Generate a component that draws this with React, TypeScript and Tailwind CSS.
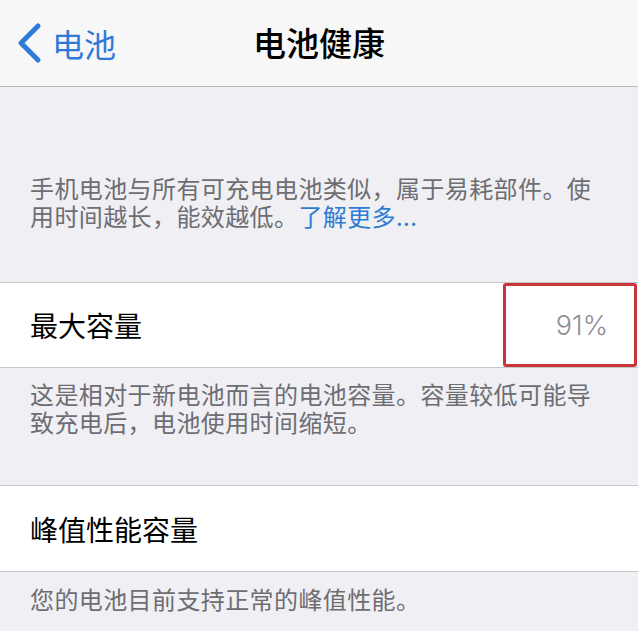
import React from 'react'

// iOS 设置 → 电池 → 电池健康
const cjk = { fontFamily: '"Noto Sans CJK SC", "Noto Sans", sans-serif' }
const latin = { fontFamily: 'Inter, "Noto Sans CJK SC", sans-serif' }

const BackChevron = () => (
  <svg width="26" height="42" viewBox="0 0 26 42" fill="none" className="shrink-0">
    <path d="M22 4 L5 21 L22 38" stroke="#2f7ad9" strokeWidth="5" strokeLinecap="round" strokeLinejoin="round" />
  </svg>
)

const Footnote = ({ children, className = '' }: { children: React.ReactNode; className?: string }) => (
  <p className={`px-[30px] text-[24px] leading-[28px] tracking-[0.4px] text-[#6d6d72] ${className}`}>{children}</p>
)

export default function App() {
  return (
    <div className="w-[638px] h-[631px] overflow-hidden bg-[#efeff4]" style={cjk}>
      {/* nav bar */}
      <div className="relative h-[87px] bg-[#f7f7f8] border-b border-[#b9b9bd] flex items-center">
        <div className="flex items-center pl-[16px] gap-[10px] -mt-[1px]">
          <BackChevron />
          <span className="text-[32px] text-[#2f7ad9] leading-none">电池</span>
        </div>
        <h1 className="absolute left-0 right-0 text-center text-[33px] font-medium text-black leading-none -mt-[1px]">
          电池健康
        </h1>
      </div>

      <Footnote className="pt-[87px]">
        手机电池与所有可充电电池类似，属于易耗部件。使用时间越长，能效越低。<a className="text-[#2e7bd2]">了解更多...</a>
      </Footnote>

      {/* 最大容量 */}
      <div className="relative mt-[52px] h-[86px] bg-white border-y border-[#c8c7cc] flex items-center justify-between px-[30px]">
        <span className="text-[28px] text-black leading-none">最大容量</span>
        <span className="text-[27px] text-[#8e8e93] leading-none font-light" style={latin}>91%</span>
        <div className="absolute right-[1px] top-0 bottom-0 w-[134px] border-[3px] border-[#c9363a] rounded-[3px]" />
      </div>

      <Footnote className="pt-[12px]">
        这是相对于新电池而言的电池容量。容量较低可能导致充电后，电池使用时间缩短。
      </Footnote>

      {/* 峰值性能容量 */}
      <div className="mt-[49px] h-[87px] bg-white border-y border-[#c8c7cc] flex items-center px-[30px]">
        <span className="text-[28px] text-black leading-none">峰值性能容量</span>
      </div>

      <Footnote className="pt-[13px]">您的电池目前支持正常的峰值性能。</Footnote>
    </div>
  )
}
